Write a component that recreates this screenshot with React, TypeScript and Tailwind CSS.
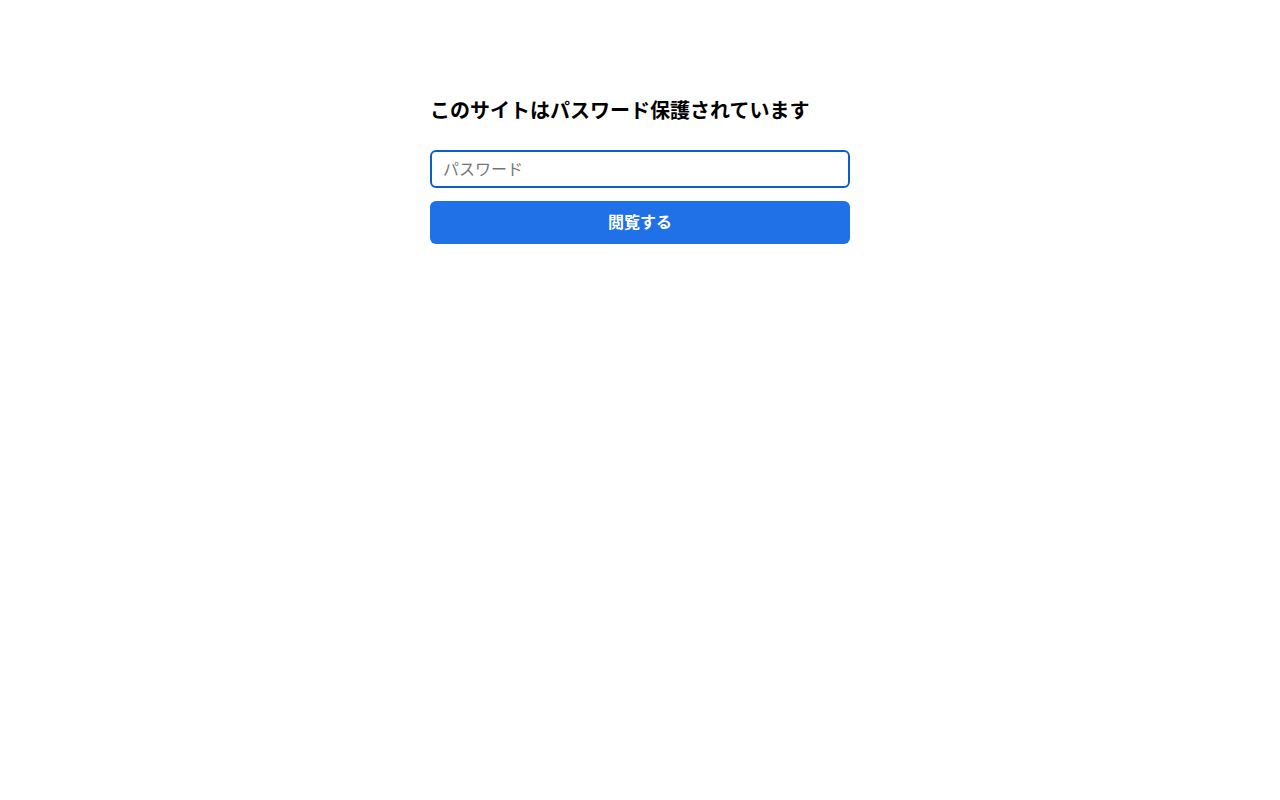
export default function App() {
  return (
    <div
      className="min-h-[800px] w-full bg-white"
      style={{ fontFamily: '"Noto Sans CJK JP", "Noto Sans", sans-serif' }}
    >
      <div className="mx-auto w-[420px] pt-[96px]">
        <h1 className="text-[20px] font-bold leading-[28px] text-black">
          このサイトはパスワード保護されています
        </h1>
        <form className="mt-[26px] flex flex-col gap-[13px]" onSubmit={(e) => e.preventDefault()}>
          <input
            type="password"
            placeholder="パスワード"
            className="h-[38px] w-full rounded-[6px] border-2 border-[#0a5fc8] px-[11px] pb-[2px] text-[16px] leading-[20px] text-black outline-none placeholder:text-[#757575]"
          />
          <button
            type="submit"
            className="h-[43px] w-full rounded-[6px] bg-[#2071e8] pb-[3px] text-[16px] font-bold text-white"
          >
            閲覧する
          </button>
        </form>
      </div>
    </div>
  );
}
